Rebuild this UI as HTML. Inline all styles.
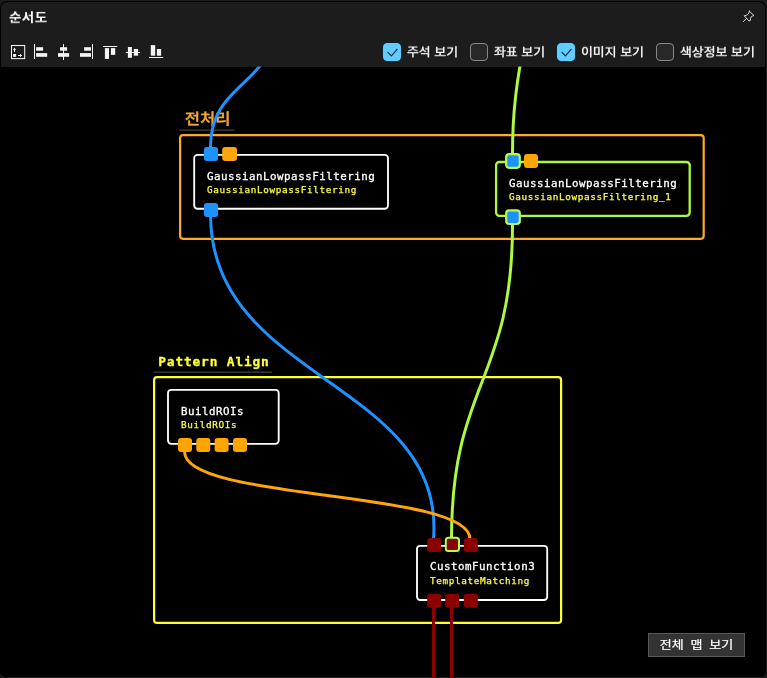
<!DOCTYPE html>
<html lang="ko">
<head>
<meta charset="utf-8">
<title>순서도</title>
<style>
html,body{margin:0;padding:0;}
body{width:767px;height:678px;overflow:hidden;position:relative;background:#1b1b1b;font-family:"Liberation Sans","Noto Sans CJK KR","NanumGothic",sans-serif;color:#fff;}
#win{position:absolute;left:0;top:1px;width:766px;height:676px;background:#000;border-radius:7px 7px 5px 5px;overflow:hidden;}
#hdr{position:absolute;left:1px;top:1px;width:764px;height:64.6px;background:#1c1c1c;border-radius:6px 6px 0 0;}
#title{position:absolute;left:9.3px;top:8px;font-size:13.5px;font-weight:700;line-height:20px;white-space:nowrap;letter-spacing:0.4px;will-change:transform;transform:scaleY(0.88);transform-origin:50% 50%;}
.cb{position:absolute;top:43px;width:16px;height:16px;border-radius:4px;border:1px solid #888;background:#282828;}
.cb.on{background:#62ccff;border-color:#62ccff;box-shadow:0 0 0 1px #0b2536;}
.lbl{position:absolute;top:41.7px;font-size:12.9px;will-change:transform;transform:scaleY(0.9);transform-origin:50% 55%;-webkit-text-stroke:0.3px #fff;line-height:20px;white-space:nowrap;color:#fff;}
#cv{position:absolute;left:0;top:0;}
.mono{font-family:"DejaVu Sans Mono","Liberation Mono",monospace;}
#btn{position:absolute;left:648px;top:633px;width:95px;height:22px;word-spacing:3.2px;will-change:transform;border:1px solid #585858;background:#333;font-size:13px;line-height:22px;text-align:center;white-space:nowrap;color:#fff;}
</style>
</head>
<body>
<div id="win">
<div id="hdr"></div>
</div>
<div id="title">순서도</div>
<div class="cb on" style="left:383px"></div><div class="lbl" style="left:406.9px">주석 보기</div>
<div class="cb" style="left:470px"></div><div class="lbl" style="left:493.8px">좌표 보기</div>
<div class="cb on" style="left:557px"></div><div class="lbl" style="left:581.2px">이미지 보기</div>
<div class="cb" style="left:656px"></div><div class="lbl" style="left:680.2px">색상정보 보기</div>
<div id="btn"><span style="display:inline-block;transform:scaleY(0.9);transform-origin:50% 50%;-webkit-text-stroke:0.25px #fff">전체 맵 보기</span></div>
<svg id="cv" width="767" height="678" viewBox="0 0 767 678">
<defs><clipPath id="cc"><rect x="0" y="66.6" width="767" height="612"/></clipPath></defs>
<!-- toolbar icons -->
<g fill="#f4f4f4" stroke="none">
 <rect x="11.5" y="45.5" width="13.2" height="13.1" fill="none" stroke="#f4f4f4" stroke-width="1.05"/>
 <rect x="14" y="48" width="1" height="4"/><rect x="13" y="49.1" width="3" height="1" opacity=".8"/>
 <rect x="13.1" y="54" width="3" height="2.9"/>
 <rect x="18" y="55" width="4" height="1"/><rect x="20" y="54" width="1" height="3" opacity=".8"/>
 <rect x="34" y="44" width="1" height="15"/><rect x="36.1" y="47.2" width="7" height="3.5"/><rect x="36.1" y="53.1" width="11.1" height="3.7"/>
 <rect x="63" y="44" width="1" height="16"/><rect x="60" y="47.2" width="7.1" height="3.5"/><rect x="58" y="53.1" width="11.1" height="3.7"/>
 <rect x="92" y="44" width="1" height="15"/><rect x="84.1" y="47.2" width="6.9" height="3.5"/><rect x="80" y="53.1" width="11" height="3.7"/>
 <rect x="103" y="46" width="14.2" height="1"/><rect x="104.9" y="48.1" width="4.1" height="10.8"/><rect x="110.9" y="48.1" width="4.3" height="6.8"/>
 <rect x="125.8" y="52" width="14.3" height="1"/><rect x="127.9" y="47" width="4" height="10.8"/><rect x="133.8" y="49" width="4.3" height="6.7"/>
 <rect x="149" y="57" width="14.2" height="1"/><rect x="150.8" y="45.1" width="4.4" height="10.6"/><rect x="156.9" y="49" width="4.2" height="6.7"/>
</g>
<!-- pin -->
<g fill="none" stroke="#e4e4e4" stroke-width="0.95" stroke-linejoin="round" stroke-linecap="round">
 <path d="M749.4 11.2L754 15.6Q749.8 16.2 750.4 20.3L748.9 20.9L744.2 15.8Q748.9 15.4 749.4 11.2ZM746.7 18.3L743.2 21.7"/>
</g>
<!-- checks -->
<g fill="none" stroke="#0b2a45" stroke-width="1.2" stroke-linecap="round" stroke-linejoin="round">
 <path d="M388 52.4l3.4 3.4 5.7-6.5"/>
 <path d="M562 52.4l3.4 3.4 5.7-6.5"/>
</g>
<g clip-path="url(#cc)">
<!-- groups -->
<rect x="180.1" y="135.1" width="523.6" height="103.7" rx="3" fill="none" stroke="#ffaa24" stroke-width="2.2"/>
<rect x="154.1" y="377.2" width="407" height="245.7" rx="3" fill="none" stroke="#ffff2a" stroke-width="2.2"/>
<rect x="179.5" y="129.6" width="55" height="1" fill="#505050"/>
<rect x="153.7" y="371.6" width="118.3" height="1" fill="#505050"/>
<text class="mono" x="158.3" y="366" font-size="12.8" font-weight="700" fill="#ffff3a" stroke="#ffff3a" stroke-width="0.3" letter-spacing="0.86">Pattern Align</text>
<text x="184.7" y="124.2" transform="matrix(1 0 0 0.87 0 16.38)" font-size="16.6" font-weight="500" fill="#f5a830" stroke="#f5a830" stroke-width="0.35" style="font-family:'Liberation Sans','Noto Sans CJK KR','NanumGothic',sans-serif">전처리</text>
<!-- nodes -->
<rect x="194.2" y="154.9" width="193.8" height="53.9" rx="3.2" fill="#000" stroke="#fff" stroke-width="1.85"/>
<rect x="496.1" y="162" width="193.6" height="53.8" rx="3.2" fill="#000" stroke="#acf93e" stroke-width="2.3"/>
<rect x="168" y="389.8" width="110.7" height="54" rx="3.2" fill="#000" stroke="#fff" stroke-width="1.85"/>
<rect x="417" y="545.8" width="130.2" height="54.2" rx="3.2" fill="#000" stroke="#fff" stroke-width="1.85"/>
<!-- wires -->
<g fill="none" stroke-width="3" stroke-linecap="butt">
 <path d="M275.8 19.7C275.8 86 210.5 80.7 210.5 147" stroke="#1e92ff"/>
 <path d="M210.6 217C212.4 380.7 446 382.7 433.5 539" stroke="#1e92ff"/>
 <path d="M532.8 -53C532.8 35.6 512.5 64.4 512.5 153" stroke="#acf93e"/>
 <path d="M512.5 225C512.5 382 451.5 382 451.5 539" stroke="#acf93e"/>
 <path d="M184.6 452C184.6 501 470 490 470 539" stroke="#ffa70a"/>
 <path d="M433.5 607V680M451.5 607V680" stroke="#8b0000" stroke-width="3"/>
</g>
<!-- ports -->
<g>
 <rect x="203.9" y="147" width="14.2" height="14" rx="3" fill="#1e92ff"/>
 <rect x="222.2" y="147" width="14.8" height="14" rx="3" fill="#ffa70a"/>
 <rect x="203.9" y="203" width="14.2" height="14" rx="3" fill="#1e92ff"/>
 <rect x="506.2" y="154.2" width="13.6" height="13.6" rx="3" fill="#1e90ff" stroke="#b4fa50" stroke-width="2.2"/>
 <rect x="524" y="154" width="14" height="14" rx="3" fill="#ffa500"/>
 <rect x="506.2" y="210.4" width="13.6" height="13.6" rx="3" fill="#1e90ff" stroke="#b4fa50" stroke-width="2.2"/>
 <rect x="178" y="438" width="14" height="14" rx="3" fill="#ffa500"/>
 <rect x="196.3" y="438" width="14" height="14" rx="3" fill="#ffa500"/>
 <rect x="214.6" y="438" width="14" height="14" rx="3" fill="#ffa500"/>
 <rect x="233" y="438" width="14" height="14" rx="3" fill="#ffa500"/>
 <rect x="427.2" y="538" width="14" height="14" rx="3" fill="#8b0000"/>
 <rect x="445.8" y="537.8" width="13.2" height="13.3" rx="2.6" fill="#8b0000" stroke="#b4fa50" stroke-width="2"/>
 <rect x="463.8" y="538" width="14" height="14" rx="3" fill="#8b0000"/>
 <rect x="427.2" y="593.8" width="14" height="14" rx="3" fill="#8b0000"/>
 <rect x="445.2" y="593.8" width="14" height="14" rx="3" fill="#8b0000"/>
 <rect x="463.8" y="593.8" width="14" height="14" rx="3" fill="#8b0000"/>
</g>
<!-- text -->
<g class="mono" font-size="10.8" fill="#fff" stroke="#fff" stroke-width="0.3" letter-spacing="0.51">
 <text x="207" y="179.7">GaussianLowpassFiltering</text>
 <text x="509" y="186.6">GaussianLowpassFiltering</text>
 <text x="181" y="414.5">BuildROIs</text>
 <text x="430" y="570.2">CustomFunction3</text>
</g>
<g class="mono" font-size="9.3" fill="#ffff46" stroke="#ffff46" stroke-width="0.25" letter-spacing="0.65">
 <text x="207" y="192.8">GaussianLowpassFiltering</text>
 <text x="509" y="199.5">GaussianLowpassFiltering_1</text>
 <text x="181" y="427.5">BuildROIs</text>
 <text x="430" y="584">TemplateMatching</text>
</g>
</g>
</svg>
</body>
</html>
